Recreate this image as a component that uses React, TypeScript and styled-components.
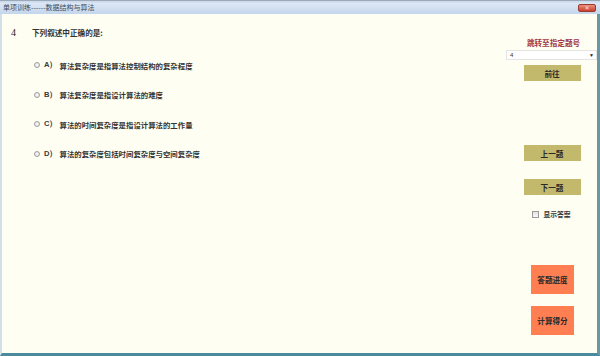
import * as React from "react";
import styled, { createGlobalStyle } from "styled-components";

const GlobalStyle = createGlobalStyle`
  html, body {
    margin: 0;
    padding: 0;
    background: #fefef2;
  }
  * {
    box-sizing: border-box;
  }
`;

const CJK = `"Noto Sans CJK SC", "Noto Sans", sans-serif`;

const Window = styled.div`
  display: flex;
  flex-direction: column;
  width: 600px;
  height: 356px;
  overflow: hidden;
  font-family: ${CJK};
`;

const TitleBar = styled.div`
  display: flex;
  align-items: center;
  justify-content: space-between;
  height: 14px;
  padding: 0 4px 0 3px;
  background: linear-gradient(#c9d7e8 0%, #dce7f4 20%, #c4d6ec 100%);
  border-top: 1px solid #9aa8b8;
  color: #3a4a5c;
  font-size: 7px;
  line-height: 1;
`;

const CloseButton = styled.div`
  display: flex;
  align-items: center;
  justify-content: center;
  width: 18px;
  height: 8px;
  border-radius: 2px;
  background: linear-gradient(#e9907f, #c8402e);
  border: 1px solid #9c3a2e;
  color: #fde;
  font-size: 6px;
  font-family: "DejaVu Sans", sans-serif;
`;

const Body = styled.div`
  flex: 1;
  display: flex;
  background: #fefef2;
  border-left: 2px solid #d4dfea;
  border-right: 3px solid #6b97a6;
  border-bottom: 3px solid #4a8c9e;
`;

const Main = styled.div`
  flex: 1;
  display: flex;
  flex-direction: column;
  padding: 13px 0 0 9px;
`;

const QuestionRow = styled.div`
  display: flex;
  align-items: center;
  height: 10px;
`;

const Number = styled.span`
  width: 21px;
  font-family: "Liberation Serif", serif;
  font-size: 10px;
  color: #222;
`;

const QuestionText = styled.span`
  font-size: 7.6px;
  font-weight: bold;
  color: #333;
`;

const OptionList = styled.div`
  display: flex;
  flex-direction: column;
  gap: 17.5px;
  margin-top: 22px;
  padding-left: 23px;
`;

const Option = styled.label`
  display: flex;
  align-items: center;
  gap: 2px;
  height: 12px;
  font-size: 7.4px;
  font-weight: bold;
  color: #333;
`;

const Radio = styled.span`
  width: 6px;
  height: 6px;
  border-radius: 50%;
  border: 1px solid #a0a0a0;
  background: radial-gradient(#f4f4f4 30%, #d8d8d8 100%);
  margin-right: 2px;
`;

const Letter = styled.span`
  font-family: "Liberation Sans", sans-serif;
  font-weight: bold;
  font-size: 7.6px;
  color: #3a3a3a;
`;

const Side = styled.div`
  width: 91px;
  display: flex;
  flex-direction: column;
  align-items: center;
  padding-top: 24px;
`;

const JumpLabel = styled.div`
  height: 10px;
  line-height: 10px;
  font-size: 7.6px;
  font-weight: bold;
  color: #a03848;
  margin-left: 4px;
`;

const Picker = styled.div`
  display: flex;
  align-items: center;
  justify-content: space-between;
  align-self: stretch;
  height: 10px;
  margin-top: 2px;
  padding: 0 2px 0 3px;
  background: #fff;
  border: 1px solid #e4e4e4;
  font-family: "Liberation Sans", sans-serif;
  font-size: 6px;
  color: #333;
`;

const Arrow = styled.span`
  font-size: 5px;
  color: #222;
`;

const Button = styled.div<{ $tone: "khaki" | "coral"; $gap: number }>`
  display: flex;
  align-items: center;
  justify-content: center;
  margin-top: ${(p) => p.$gap}px;
  width: ${(p) => (p.$tone === "khaki" ? 57 : 43)}px;
  height: ${(p) => (p.$tone === "khaki" ? 16 : 29)}px;
  background: ${(p) => (p.$tone === "khaki" ? "#c2b96d" : "#ff7f52")};
  color: #2a2a2a;
  font-size: 7.6px;
  font-weight: bold;
  margin-left: ${(p) => (p.$tone === "khaki" ? 1 : 2)}px;
`;

const CheckRow = styled.label`
  display: flex;
  align-items: center;
  gap: 4px;
  margin-top: 15px;
  height: 8px;
  font-size: 6.8px;
  font-weight: bold;
  color: #333;
`;

const CheckBox = styled.span`
  width: 7px;
  height: 7px;
  border: 1px solid #9a9a9a;
  background: linear-gradient(#e2e2e2, #f8f8f8);
`;

const options = [
  "算法复杂度是指算法控制结构的复杂程度",
  "算法复杂度是指设计算法的难度",
  "算法的时间复杂度是指设计算法的工作量",
  "算法的复杂度包括时间复杂度与空间复杂度",
];

export default function App() {
  return (
    <>
      <GlobalStyle />
      <Window>
        <TitleBar>
          <span>单项训练------数据结构与算法</span>
          <CloseButton>✕</CloseButton>
        </TitleBar>
        <Body>
          <Main>
            <QuestionRow>
              <Number>4</Number>
              <QuestionText>下列叙述中正确的是:</QuestionText>
            </QuestionRow>
            <OptionList>
              {options.map((text, i) => (
                <Option key={i}>
                  <Radio />
                  <Letter>{String.fromCharCode(65 + i)}）</Letter>
                  <span>{text}</span>
                </Option>
              ))}
            </OptionList>
          </Main>
          <Side>
            <JumpLabel>跳转至指定题号</JumpLabel>
            <Picker>
              <span>4</span>
              <Arrow>▼</Arrow>
            </Picker>
            <Button $tone="khaki" $gap={5}>前往</Button>
            <Button $tone="khaki" $gap={64}>上一题</Button>
            <Button $tone="khaki" $gap={18}>下一题</Button>
            <CheckRow>
              <CheckBox />
              <span>显示答案</span>
            </CheckRow>
            <Button $tone="coral" $gap={47}>答题进度</Button>
            <Button $tone="coral" $gap={12}>计算得分</Button>
          </Side>
        </Body>
      </Window>
    </>
  );
}
